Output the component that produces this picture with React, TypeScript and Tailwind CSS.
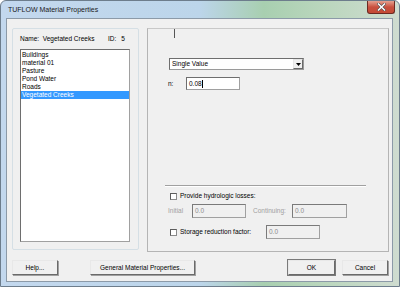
import React from 'react';

const MATERIALS = ['Buildings', 'material 01', 'Pasture', 'Pond Water', 'Roads', 'Vegetated Creeks'];
const SELECTED = 'Vegetated Creeks';

function CloseButton() {
  return (
    <div className="ml-auto mr-[4px] w-[28px] h-[13px] rounded-b-[3px] border border-t-0 border-[#6b2a22] bg-gradient-to-b from-[#e4a090] via-[#c9503e] to-[#c44a36] flex items-center justify-center">
      <svg width="9" height="8" viewBox="0 0 9 8">
        <path d="M1.5 1L7.5 7M7.5 1L1.5 7" stroke="#4a4a4a" strokeWidth="2.6" strokeLinecap="square" />
        <path d="M1.5 1L7.5 7M7.5 1L1.5 7" stroke="#ffffff" strokeWidth="1.5" strokeLinecap="square" />
      </svg>
    </div>
  );
}

function TextBox({ value, width, disabled }: { value: string; width: number; disabled?: boolean }) {
  return (
    <div
      className={`h-[14px] border border-[#a0a0a0] border-t-[#7a7a7a] border-l-[#7a7a7a] flex items-center pl-[2px] ${disabled ? 'bg-[#f0f0f0] text-[#8c8c8c]' : 'bg-white text-black'}`}
      style={{ width }}
    >
      {value}
    </div>
  );
}

function CheckBox() {
  return <div className="w-[7px] h-[7px] bg-white border border-[#8a8a8a] border-t-[#5c5c5c] border-l-[#5c5c5c] shrink-0" />;
}

function Button({ label, width, isDefault }: { label: string; width: number; isDefault?: boolean }) {
  return (
    <div
      className={`h-[15px] bg-[#f0f0f0] flex items-center justify-center border border-t-[#e8e8e8] border-l-[#e8e8e8] border-r-[#6a6a6a] border-b-[#6a6a6a] shadow-[1px_1px_0_#a0a0a0] ${isDefault ? 'outline outline-1 outline-[#7a7a7a]' : ''}`}
      style={{ width }}
    >
      {label}
    </div>
  );
}

export default function App() {
  return (
    <div
      className="w-[400px] h-[287px] flex flex-col border border-[#6d7d8c] rounded-t-[6px] overflow-hidden bg-[linear-gradient(90deg,#c3d8ee_0%,#bcd5ea_50%,#a8cfb0_66%,#b9d6bc_80%,#cfdcd0_100%)] text-[6.5px] leading-[8px] text-black"
      style={{ fontFamily: '"Liberation Sans", Arial, sans-serif' }}
    >
      {/* TITLE BAR */}
      <div className="h-[17px] flex items-start shrink-0">
        <span className="pl-[7px] pt-[5px] text-[7px] leading-[8px] text-[#1a1a1a]">TUFLOW Material Properties</span>
        <CloseButton />
      </div>

      {/* CLIENT AREA */}
      <div className="ml-[5px] w-[387px] h-[264px] bg-[#f0f0f0] border border-[#8c9aa8] flex flex-col">
        <div className="flex pt-[9px] pl-[5px] gap-[8px]">
          {/* LEFT: material list */}
          <div className="w-[127px] h-[222px] border border-[#d5dfe5] rounded-[2px] flex flex-col">
            <div className="flex mt-[6px] pl-[7px] h-[8px]">
              <span className="w-[88px]">Name:&nbsp; Vegetated Creeks</span>
              <span>ID:</span>
              <span className="ml-[5px]">5</span>
            </div>
            <div className="mt-[6px] ml-[7px] w-[110px] h-[193px] bg-white border border-[#a0a0a0] border-t-[#6e6e6e] border-l-[#6e6e6e] pt-[1px]">
              {MATERIALS.map(m => (
                <div
                  key={m}
                  className={`h-[8px] pl-[1px] ${m === SELECTED ? 'bg-[#3399ff] text-white' : ''}`}
                >
                  {m}
                </div>
              ))}
            </div>
          </div>

          {/* RIGHT: properties panel */}
          <div className="w-[242px] h-[224px] border border-[#b4b4b4] border-t-[#c8c8c8] flex flex-col">
            <div className="ml-[26px] w-[1px] h-[9px] bg-[#555]" />

            <div className="mt-[20px] ml-[21px] w-[135px] h-[12px] bg-white border border-[#9a9a9a] border-t-[#6e6e6e] border-l-[#6e6e6e] flex items-center">
              <span className="pl-[2px] flex-1">Single Value</span>
              <div className="w-[10px] h-[10px] bg-[#f0f0f0] border border-[#e6e6e6] border-r-[#6a6a6a] border-b-[#6a6a6a] flex items-center justify-center">
                <svg width="5" height="3" viewBox="0 0 5 3">
                  <path d="M0 0H5L2.5 3Z" fill="#000" />
                </svg>
              </div>
            </div>

            <div className="mt-[7px] ml-[20px] flex items-center h-[13px]">
              <span className="w-[18px]">n:</span>
              <div className="w-[54px] h-[13px] bg-white border border-[#a0a0a0] border-t-[#6e6e6e] border-l-[#6e6e6e] flex items-center pl-[2px]">
                0.08<span className="w-[1px] h-[8px] bg-black" />
              </div>
            </div>

            <div className="mt-[95px] ml-[17px] w-[201px] h-[1px] bg-[#a0a0a0] shadow-[0_1px_0_#ffffff]" />

            <div className="mt-[6px] ml-[22px] flex items-center gap-[3px] h-[8px]">
              <CheckBox />
              <span>Provide hydrologic losses:</span>
            </div>

            <div className="mt-[4px] ml-[20px] flex items-center h-[14px]">
              <span className="w-[24px] text-[#a0a0a0]">Initial</span>
              <TextBox value="0.0" width={54} disabled />
              <span className="ml-[7px] w-[39px] text-[#a0a0a0]">Continuing:</span>
              <TextBox value="0.0" width={55} disabled />
            </div>

            <div className="mt-[7px] ml-[22px] flex items-center h-[14px]">
              <CheckBox />
              <span className="ml-[3px] w-[86px]">Storage reduction factor:</span>
              <TextBox value="0.0" width={54} disabled />
            </div>
          </div>
        </div>

        {/* BUTTON ROW */}
        <div className="flex mt-[8px] pl-[5px] pr-[4px]">
          <Button label="Help..." width={46} />
          <div className="ml-[32px]">
            <Button label="General Material Properties..." width={105} />
          </div>
          <div className="ml-auto">
            <Button label="OK" width={47} isDefault />
          </div>
          <div className="ml-[7px]">
            <Button label="Cancel" width={46} />
          </div>
        </div>
      </div>
    </div>
  );
}
